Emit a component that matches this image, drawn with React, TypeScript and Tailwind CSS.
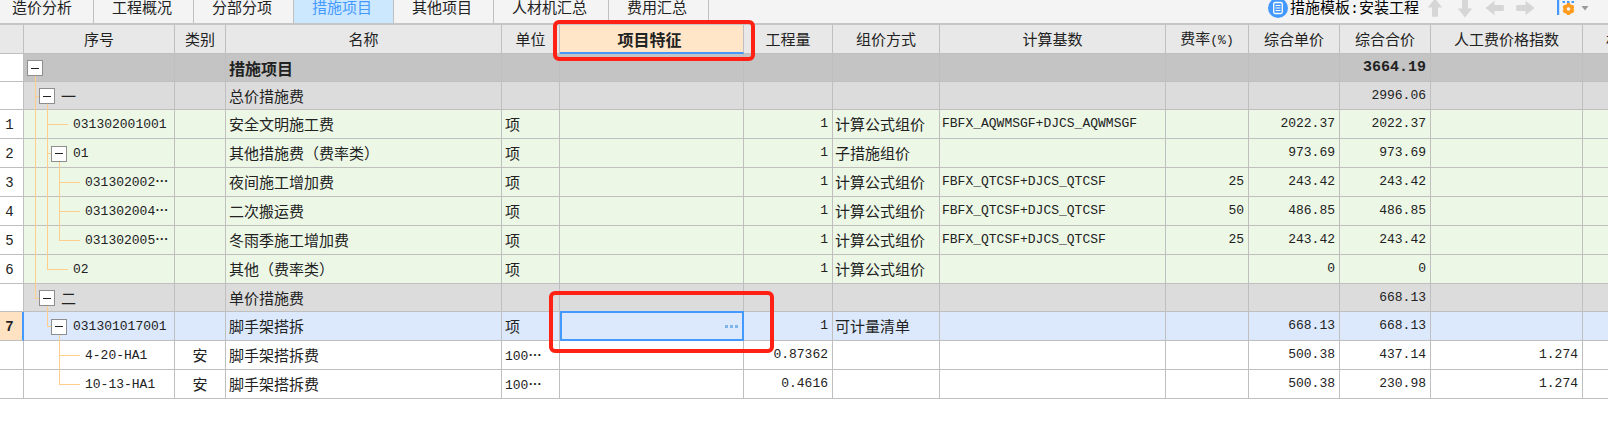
import { useState } from "react";

type Guide = "pass" | "tee" | "end" | "none";

type Row = {
  no?: string;
  kind: "root" | "group" | "item" | "plain" | "selected";
  guides: Guide[];
  branch?: boolean;
  code?: string;
  type?: string;
  name: string;
  unit?: string;
  qty?: string;
  method?: string;
  base?: string;
  rate?: string;
  price?: string;
  total?: string;
  index?: string;
};

const tabs = ["造价分析", "工程概况", "分部分项", "措施项目", "其他项目", "人材机汇总", "费用汇总"];

const rows: Row[] = [
  { kind: "root", guides: [], branch: true, name: "措施项目", total: "3664.19" },
  { kind: "group", guides: ["tee"], branch: true, code: "一", name: "总价措施费", total: "2996.06" },
  { no: "1", kind: "item", guides: ["pass", "tee"], code: "031302001001", name: "安全文明施工费", unit: "项", qty: "1", method: "计算公式组价", base: "FBFX_AQWMSGF+DJCS_AQWMSGF", price: "2022.37", total: "2022.37" },
  { no: "2", kind: "item", guides: ["pass", "tee"], branch: true, code: "01", name: "其他措施费（费率类）", unit: "项", qty: "1", method: "子措施组价", price: "973.69", total: "973.69" },
  { no: "3", kind: "item", guides: ["pass", "pass", "tee"], code: "031302002⋯", name: "夜间施工增加费", unit: "项", qty: "1", method: "计算公式组价", base: "FBFX_QTCSF+DJCS_QTCSF", rate: "25", price: "243.42", total: "243.42" },
  { no: "4", kind: "item", guides: ["pass", "pass", "tee"], code: "031302004⋯", name: "二次搬运费", unit: "项", qty: "1", method: "计算公式组价", base: "FBFX_QTCSF+DJCS_QTCSF", rate: "50", price: "486.85", total: "486.85" },
  { no: "5", kind: "item", guides: ["pass", "pass", "end"], code: "031302005⋯", name: "冬雨季施工增加费", unit: "项", qty: "1", method: "计算公式组价", base: "FBFX_QTCSF+DJCS_QTCSF", rate: "25", price: "243.42", total: "243.42" },
  { no: "6", kind: "item", guides: ["pass", "end"], code: "02", name: "其他（费率类）", unit: "项", qty: "1", method: "计算公式组价", price: "0", total: "0" },
  { kind: "group", guides: ["end"], branch: true, code: "二", name: "单价措施费", total: "668.13" },
  { no: "7", kind: "selected", guides: ["none", "end"], branch: true, code: "031301017001", name: "脚手架搭拆", unit: "项", qty: "1", method: "可计量清单", price: "668.13", total: "668.13" },
  { kind: "plain", guides: ["none", "none", "tee"], code: "4-20-HA1", type: "安", name: "脚手架搭拆费", unit: "100⋯", qty: "0.87362", price: "500.38", total: "437.14", index: "1.274" },
  { kind: "plain", guides: ["none", "none", "end"], code: "10-13-HA1", type: "安", name: "脚手架搭拆费", unit: "100⋯", qty: "0.4616", price: "500.38", total: "230.98", index: "1.274" },
];

const rowStyle: Record<Row["kind"], string> = {
  root: "h-7 bg-[#c4c4c4] font-bold",
  group: "h-7 bg-[#dcdcdc]",
  item: "h-[29px] bg-[#ecf7e6]",
  plain: "h-[29px] bg-white",
  selected: "h-[29px] bg-[#dce9fd]",
};

const mono = "font-['Liberation_Mono','Noto_Sans_CJK_SC',monospace]";
const cell = "border-r border-b border-[#bfbfbf] p-0 whitespace-nowrap";

function Clipped({ text = "" }: { text?: string }) {
  if (!text.endsWith("⋯")) return <>{text}</>;
  return (
    <>
      {text.slice(0, -1)}
      <b>⋯</b>
    </>
  );
}

function GuideLine({ shape, leaf }: { shape: Guide; leaf: boolean }) {
  const through = shape === "pass" || shape === "tee";
  return (
    <span className={`flex shrink-0 flex-col pl-2 ${leaf ? "w-[34px] pr-[5px]" : "w-3"}`}>
      <span
        className={`flex-1 border-[#ffcd8c] ${shape === "none" ? "" : "border-l"} ${
          shape === "tee" || shape === "end" ? "border-b" : ""
        }`}
      />
      <span className={`flex-1 border-[#ffcd8c] ${through ? "border-l" : ""}`} />
    </span>
  );
}

function TreeCell({ row }: { row: Row }) {
  const last = row.guides.length - 1;
  const short = row.kind === "root" || row.kind === "group";
  return (
    <div className={`-mb-px flex pl-[3px] ${short ? "h-7" : "h-[29px]"}`}>
      {row.guides.map((g, i) => (
        <GuideLine key={i} shape={g} leaf={!row.branch && i === last} />
      ))}
      {row.branch && (
        <span className="mr-1.5 flex w-4 shrink-0 flex-col">
          <span className="flex-1" />
          <button
            type="button"
            aria-label={`折叠 ${row.name}`}
            className="flex size-4 items-center justify-center border border-[#8e8e8e] bg-white"
          >
            <span className="h-px w-2 bg-[#222]" />
          </button>
          <span className="ml-2 flex-1 border-l border-[#ffcd8c]" />
        </span>
      )}
      <span className={`self-center ${row.kind === "group" ? "text-[15px]" : `${mono} text-[13px]`}`}>
        <Clipped text={row.code} />
      </span>
    </div>
  );
}

function Arrow({ turn }: { turn: string }) {
  return (
    <button type="button" aria-label={turn} className="flex size-5 items-center justify-center">
      <svg
        viewBox="0 0 20 20"
        className={`size-5 fill-[#d6d6d6] ${
          turn === "下移" ? "rotate-180" : turn === "升级" ? "-rotate-90" : turn === "降级" ? "rotate-90" : ""
        }`}
      >
        <path d="M10 0.500 17.200 9.500H13V18.800H7V9.500H2.800Z" />
      </svg>
    </button>
  );
}

function Toolbar() {
  return (
    <div className="mr-[19px] flex h-4 items-center">
      <button type="button" className="flex items-center gap-[2px] text-black">
        <svg viewBox="0 0 20 20" className="size-5">
          <circle cx="10" cy="10" r="10" fill="#4499ff" />
          <rect x="5.700" y="4.500" width="8.600" height="11" rx="1.500" fill="none" stroke="#fff" strokeWidth="1.300" />
          <path d="M7.500 7.500h5M7.500 10h5M7.500 12.500h5" stroke="#fff" strokeWidth="1" />
        </svg>
        <span>
          措施模板<span className={mono}>:</span>安装工程
        </span>
      </button>
      <div className="ml-1.5 flex gap-2.5">
        <Arrow turn="上移" />
        <Arrow turn="下移" />
        <Arrow turn="升级" />
        <Arrow turn="降级" />
      </div>
      <button type="button" aria-label="设置" className="ml-[22px] flex items-center gap-1">
        <svg viewBox="0 0 20 20" className="size-5">
          <path d="M1 0v17" stroke="#4499ff" strokeWidth="2.400" />
          <path d="M5.500 4h2.500M10 4h2.500M14.500 4H17" stroke="#4499ff" strokeWidth="2" />
          <circle cx="11.500" cy="11" r="3.600" fill="none" stroke="#ff9c1f" strokeWidth="3.400" />
          <path d="M11.500 5v12M6.300 8l10.400 6M6.300 14l10.400-6" stroke="#ff9c1f" strokeWidth="3" />
          <circle cx="11.500" cy="11" r="1.800" fill="#f4f4f4" />
        </svg>
        <svg viewBox="0 0 8 5" className="h-[5px] w-2">
          <path d="M0.500 0h7L4 4.500Z" fill="#9a9a9a" />
        </svg>
      </button>
    </div>
  );
}

export default function App() {
  const [active, setActive] = useState("措施项目");
  const [feature, setFeature] = useState("");
  return (
    <div className="min-h-screen overflow-hidden bg-white font-['Noto_Sans_CJK_SC',sans-serif] text-[15px] leading-5 text-[#222]">
      <div className="flex items-start justify-between bg-[#f4f4f4]">
        <nav className="flex">
          {tabs.map((t) => (
            <button
              key={t}
              type="button"
              onClick={() => setActive(t)}
              className={`h-[23px] border-r border-[#c0c0c0] pr-[21px] pb-[9px] pl-[18px] leading-[14px] whitespace-nowrap first:pl-3 ${
                t === active ? "bg-[#cce8ff] text-[#4499ff]" : ""
              }`}
            >
              {t}
            </button>
          ))}
        </nav>
        <Toolbar />
      </div>
      <table className="w-full min-w-[1735px] table-fixed border-separate border-spacing-0 border-t-2 border-[#c6c6c6]">
        <colgroup>
          <col className="w-6" />
          <col className="w-[151px]" />
          <col className="w-[51px]" />
          <col className="w-[276px]" />
          <col className="w-[58px]" />
          <col className="w-[184px]" />
          <col className="w-[89px]" />
          <col className="w-[107px]" />
          <col className="w-[226px]" />
          <col className="w-[83px]" />
          <col className="w-[91px]" />
          <col className="w-[91px]" />
          <col className="w-[152px]" />
          <col />
        </colgroup>
        <thead>
          <tr className="h-[29px] bg-[#e8e8e8]">
            <th className={cell} />
            {["序号", "类别", "名称", "单位"].map((h) => (
              <th key={h} className={`${cell} font-normal`}>{h}</th>
            ))}
            <th className="relative border-r border-b-2 border-r-[#bfbfbf] border-b-[#4499ff] bg-[#ffe6c8] p-0 pr-1 text-base leading-5 font-bold">
              项目特征
              <span className="pointer-events-none absolute -top-[5px] -left-[7px] z-10 h-[41px] w-[202px] rounded-md border-4 border-[#ff2214]" />
            </th>
            {["工程量", "组价方式", "计算基数"].map((h) => (
              <th key={h} className={`${cell} font-normal`}>{h}</th>
            ))}
            <th className={`${cell} font-normal`}>
              费率<span className={`${mono} text-[13px]`}>(%)</span>
            </th>
            {["综合单价", "综合合价", "人工费价格指数", "材料费价格指数"].map((h) => (
              <th key={h} className={`${cell} font-normal`}>{h}</th>
            ))}
          </tr>
        </thead>
        <tbody>
          {rows.map((r, i) => {
            const num = `${cell} ${mono} pr-1 text-right ${r.kind === "root" ? "text-[15px]" : "text-[13px]"}`;
            const selected = r.kind === "selected";
            return (
              <tr key={i} className={rowStyle[r.kind]}>
                <td
                  className={`border-b border-[#bfbfbf] p-0 pt-[2px] text-center ${mono} text-[14px] ${
                    selected ? "border-r-2 border-r-[#4499ff] bg-[#ffe2c2] pr-[3px] font-bold" : "border-r bg-white pr-1"
                  }`}
                >
                  {r.no}
                </td>
                <td className={`${cell} align-top`}>
                  <TreeCell row={r} />
                </td>
                <td className={`${cell} text-center`}>{r.type}</td>
                <td className={`${cell} pl-[3px] ${r.kind === "root" ? "text-base leading-5" : ""}`}>{r.name}</td>
                <td className={`${cell} pl-[3px]`}>
                  {r.unit === "项" ? (
                    r.unit
                  ) : (
                    <span className={`${mono} text-[13px]`}>
                      <Clipped text={r.unit} />
                    </span>
                  )}
                </td>
                {selected ? (
                  <td className="relative border-b border-[#bfbfbf] p-0">
                    <div className="-mt-px -mb-px flex h-[30px] items-center border-2 border-[#4499ff] pr-1">
                      <input
                        aria-label="项目特征"
                        value={feature}
                        onChange={(e) => setFeature(e.target.value)}
                        className="min-w-0 flex-1 bg-transparent px-1 outline-none"
                      />
                      <button type="button" aria-label="编辑项目特征" className="flex gap-[2px]">
                        <span className="h-[3px] w-[3px] bg-[#7db6ea]" />
                        <span className="h-[3px] w-[3px] bg-[#7db6ea]" />
                        <span className="h-[3px] w-[3px] bg-[#7db6ea]" />
                      </button>
                    </div>
                    <span className="pointer-events-none absolute -top-[21px] -left-[11px] z-10 h-[62px] w-[225px] rounded-md border-4 border-[#ff2214]" />
                  </td>
                ) : (
                  <td className={cell} />
                )}
                <td className={num}>{r.qty}</td>
                <td className={`${cell} pl-[2px]`}>{r.method}</td>
                <td className={`${cell} ${mono} pl-[2px] text-[13px]`}>{r.base}</td>
                <td className={num}>{r.rate}</td>
                <td className={num}>{r.price}</td>
                <td className={num}>{r.total}</td>
                <td className={num}>{r.index}</td>
                <td className={cell} />
              </tr>
            );
          })}
        </tbody>
      </table>
    </div>
  );
}
